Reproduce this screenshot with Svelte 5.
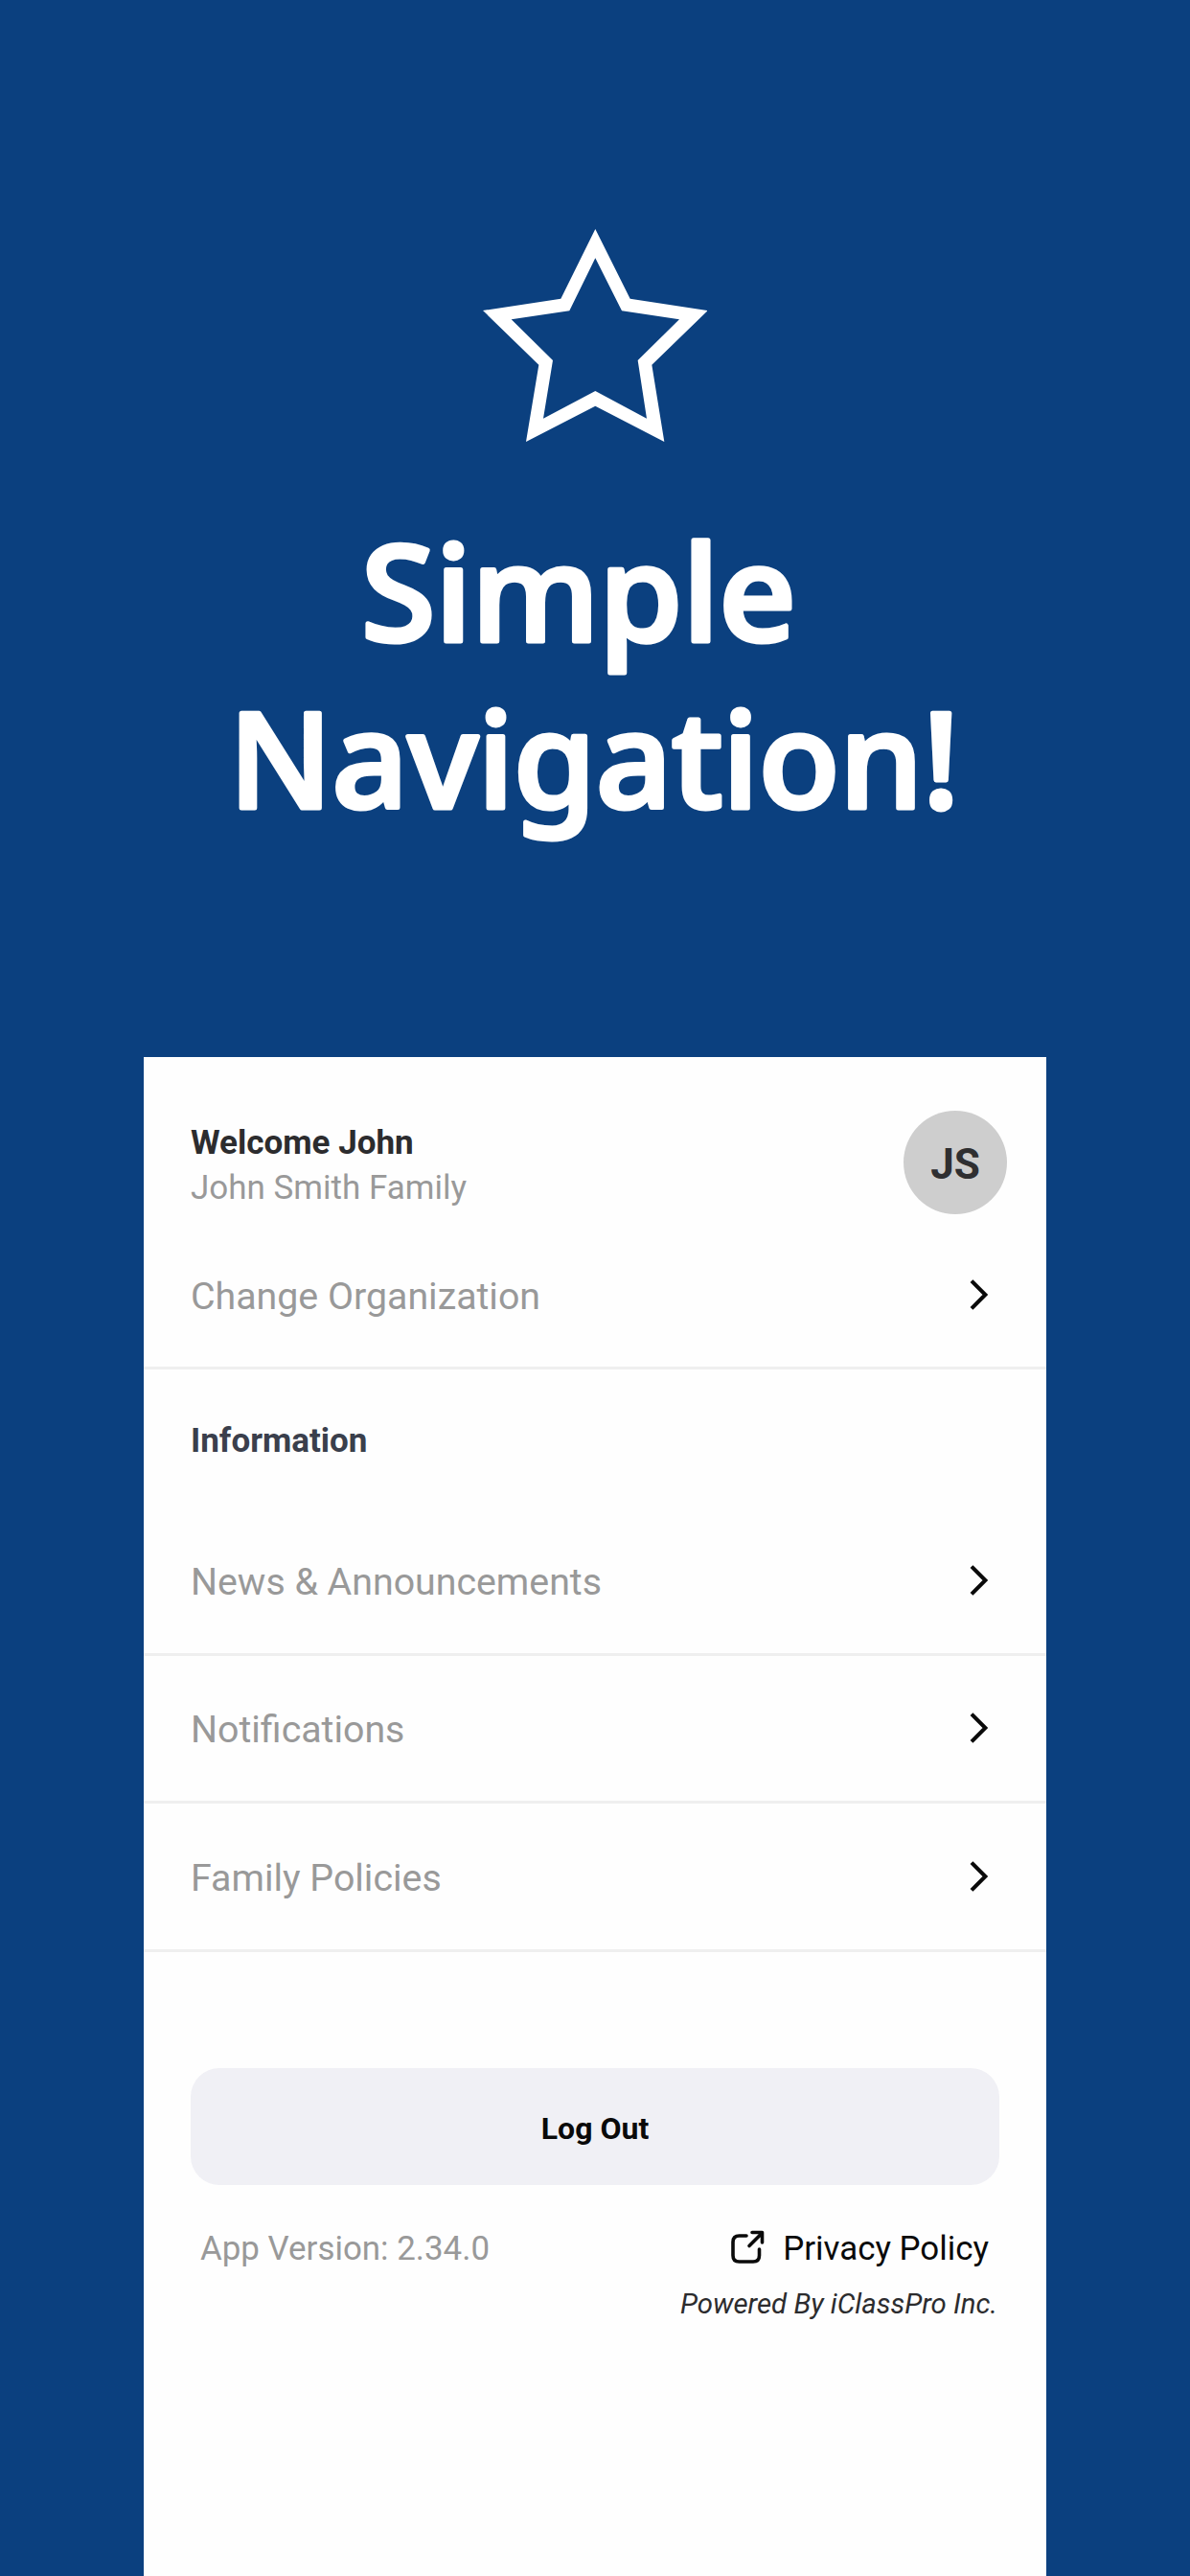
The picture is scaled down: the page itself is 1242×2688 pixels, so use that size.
<script lang="ts">
	interface Item {
		label: string;
	}

	const account: Item[] = [{ label: 'Change Organization' }];

	const information: Item[] = [
		{ label: 'News & Announcements' },
		{ label: 'Notifications' },
		{ label: 'Family Policies' },
	];
</script>

{#snippet row(item: Item)}
	<li class="row">
		<span class="label">{item.label}</span>
		<svg class="chevron" viewBox="0 0 20 34" aria-hidden="true">
			<path d="M2 2.6 16.4 17 2 31.4" />
		</svg>
	</li>
{/snippet}

<main class="promo">
	<header class="hero">
		<svg class="star" viewBox="73 57 704 666" aria-hidden="true">
			<path
				fill-rule="evenodd"
				d="M425 57 534 275 777 312 602 482 641 723 425 611 208 723 248 482 73 312 317 275Z
				M425 148 344 313 162 340 292 468 262 650 425 564 586 650 558 468 688 340 508 313Z"
			/>
		</svg>
		<!-- svg text so the corners can be rounded with a stroke -->
		<h1>
			<svg class="title" viewBox="0 0 1242 420">
				<text x="377" y="188" textLength="454" lengthAdjust="spacingAndGlyphs">Simple</text>
				<text x="239" y="362" textLength="762" lengthAdjust="spacingAndGlyphs">Navigation!</text>
			</svg>
		</h1>
	</header>

	<section class="panel">
		<div class="profile">
			<div class="who">
				<div class="welcome">Welcome John</div>
				<div class="family">John Smith Family</div>
			</div>
			<div class="avatar">JS</div>
		</div>

		<ul>
			{#each account as item}
				{@render row(item)}
			{/each}
		</ul>

		<h2>Information</h2>

		<ul>
			{#each information as item}
				{@render row(item)}
			{/each}
		</ul>

		<button class="logout">Log Out</button>

		<div class="meta">
			<span class="version">App Version: 2.34.0</span>
			<a class="privacy" href="#privacy">
				<svg class="external" viewBox="0 0 36 36" aria-hidden="true">
					<path d="M17 6H9.500Q3 6 3 12.500V26.500Q3 33 9.500 33H24Q30.500 33 30.500 26.500V20" />
					<path d="M20 16.500 33 3.500M23 2.500H33.500V13" />
				</svg>
				<span>Privacy Policy</span>
			</a>
		</div>
		<div class="powered">Powered By iClassPro Inc.</div>
	</section>
</main>

<style>
	:global(body) {
		background: #0b407f;
	}

	.promo {
		display: flex;
		flex-direction: column;
		width: 1242px;
		height: 2688px;
		overflow: hidden;
		background: #0b407f;
		font-family: Roboto, sans-serif;
	}

	.hero {
		display: flex;
		flex-direction: column;
		align-items: center;
		box-sizing: border-box;
		height: 1103px;
		padding-top: 239px;
		flex: none;
	}

	.star {
		display: block;
		width: 234.67px;
		height: 222px;
		fill: #fff;
	}

	h1 {
		margin: 20px 0 0;
	}

	.title {
		display: block;
		width: 1242px;
		height: 420px;
		overflow: visible;
		font-family: 'Noto Sans', sans-serif;
		font-size: 138px;
		font-weight: 500;
		fill: #fff;
		stroke: #fff;
		stroke-width: 5px;
		stroke-linejoin: round;
	}

	.panel {
		flex: 1;
		margin: 0 150px;
		background: #fefefe;
	}

	.profile {
		display: flex;
		align-items: center;
		justify-content: space-between;
		height: 108px;
		padding: 56px 41px 8px 49px;
	}

	.who {
		padding-top: 6px;
		font-size: 35px;
		line-height: 47.400px;
	}

	.welcome {
		font-weight: 700;
		color: #2c2c2e;
	}

	.family {
		color: #999;
	}

	.avatar {
		display: flex;
		align-items: center;
		justify-content: center;
		box-sizing: border-box;
		width: 108px;
		height: 108px;
		padding-top: 4px;
		border-radius: 50%;
		background: #cecece;
		color: #2f2f31;
		font-size: 44px;
		font-weight: 700;
	}

	ul {
		margin: 0;
		padding: 0;
		list-style: none;
	}

	.row {
		display: flex;
		align-items: center;
		justify-content: space-between;
		box-sizing: border-box;
		height: 154.400px;
		padding: 0 60px 0 49px;
		border-bottom: 3px solid #efefef;
	}

	.label {
		padding-top: 4px;
		font-size: 39.300px;
		color: #999;
	}

	.chevron {
		width: 20px;
		height: 34px;
		fill: none;
		stroke: #0a0a0a;
		stroke-width: 4;
	}

	h2 {
		margin: 0;
		padding: 6px 49px 0;
		font-size: 35px;
		font-weight: 700;
		line-height: 138px;
		color: #3a3f4c;
	}

	.logout {
		display: block;
		width: 844px;
		height: 122px;
		margin: 121px 0 0 49px;
		padding: 4px 0 0;
		border: 0;
		border-radius: 30px;
		background: #f0f0f5;
		color: #0a0a0a;
		font-family: inherit;
		font-size: 32px;
		font-weight: 700;
	}

	.meta {
		display: flex;
		align-items: center;
		justify-content: space-between;
		padding: 43px 60px 0 59px;
		font-size: 34.900px;
		line-height: 48px;
	}

	.version {
		color: #999;
	}

	.privacy {
		display: flex;
		align-items: center;
		gap: 19px;
		color: #0a0a0a;
		text-decoration: none;
	}

	.external {
		width: 36px;
		height: 36px;
		margin-bottom: 4px;
		fill: none;
		stroke: #0a0a0a;
		stroke-width: 3.600;
		stroke-linecap: round;
		stroke-linejoin: round;
	}

	.powered {
		padding: 13px 51px 0 0;
		font-size: 29.400px;
		font-style: italic;
		line-height: 40px;
		text-align: right;
		color: #2c2c2e;
	}
</style>
